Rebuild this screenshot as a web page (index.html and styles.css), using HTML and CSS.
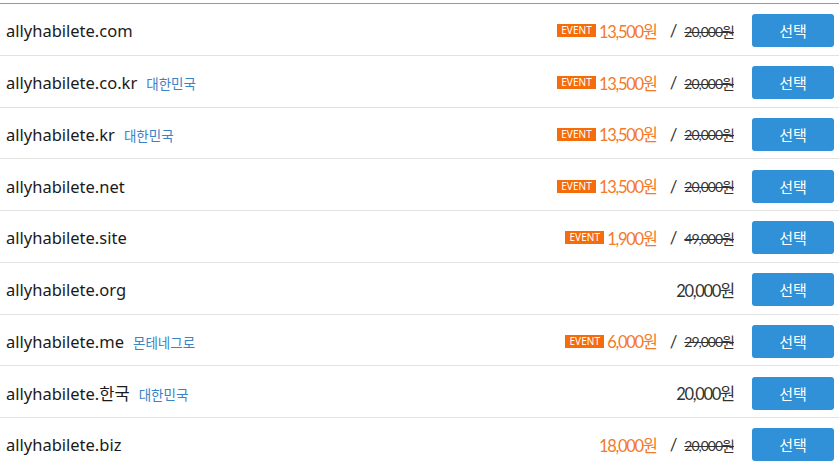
FILE: index.html
```html
<!DOCTYPE html>
<html lang="ko">
<head>
<meta charset="utf-8">
<link rel="stylesheet" href="styles.css">
</head>
<body>
<ul class="list">
  <li class="row"><div class="name">allyhabilete.com</div><div class="price"><span class="event">EVENT</span><span class="sale">13,500원</span><span class="slash">/</span><span class="old">20,000원</span></div><button class="btn">선택</button></li>
  <li class="row"><div class="name">allyhabilete.co.kr<span class="country">대한민국</span></div><div class="price"><span class="event">EVENT</span><span class="sale">13,500원</span><span class="slash">/</span><span class="old">20,000원</span></div><button class="btn">선택</button></li>
  <li class="row"><div class="name">allyhabilete.kr<span class="country">대한민국</span></div><div class="price"><span class="event">EVENT</span><span class="sale">13,500원</span><span class="slash">/</span><span class="old">20,000원</span></div><button class="btn">선택</button></li>
  <li class="row"><div class="name">allyhabilete.net</div><div class="price"><span class="event">EVENT</span><span class="sale">13,500원</span><span class="slash">/</span><span class="old">20,000원</span></div><button class="btn">선택</button></li>
  <li class="row"><div class="name">allyhabilete.site</div><div class="price"><span class="event">EVENT</span><span class="sale">1,900원</span><span class="slash">/</span><span class="old">49,000원</span></div><button class="btn">선택</button></li>
  <li class="row"><div class="name">allyhabilete.org</div><div class="price"><span class="normal">20,000원</span></div><button class="btn">선택</button></li>
  <li class="row"><div class="name">allyhabilete.me<span class="country">몬테네그로</span></div><div class="price"><span class="event">EVENT</span><span class="sale">6,000원</span><span class="slash">/</span><span class="old">29,000원</span></div><button class="btn">선택</button></li>
  <li class="row"><div class="name">allyhabilete.한국<span class="country">대한민국</span></div><div class="price"><span class="normal">20,000원</span></div><button class="btn">선택</button></li>
  <li class="row"><div class="name">allyhabilete.biz</div><div class="price"><span class="sale">18,000원</span><span class="slash">/</span><span class="old">20,000원</span></div><button class="btn">선택</button></li>
</ul>
</body>
</html>
```
FILE: styles.css
```css
html, body {
  margin: 0;
  padding: 0;
  background: #fff;
}
body {
  padding-top: 3px;
}
.list {
  list-style: none;
  margin: 0;
  padding: 0;
  border-top: 1px solid #999;
}
.row {
  box-sizing: border-box;
  display: flex;
  align-items: center;
  height: 51.75px;
  border-bottom: 1px solid #e2e2e2;
  padding: 3px 5px 0 6px;
}
.name {
  flex: 1;
  font-family: "Noto Sans", "Noto Sans CJK KR", sans-serif;
  font-size: 16.5px;
  color: #1a1a1a;
  display: flex;
  align-items: baseline;
}
.country {
  font-size: 13.5px;
  color: #3a84c6;
  margin-left: 9px;
  font-family: "Noto Sans CJK KR", sans-serif;
}
.price {
  display: flex;
  align-items: center;
  font-family: Lato, "Noto Sans CJK KR", sans-serif;
  margin-right: 18px;
}
.event {
  background: #f56c0a;
  color: #fff;
  font-family: "Noto Sans", sans-serif;
  font-size: 10px;
  line-height: 13px;
  padding: 0 4px;
  margin-right: 3px;
  letter-spacing: 0.1px;
}
.sale {
  color: #f47a2a;
  font-size: 16.5px;
  letter-spacing: -1.3px;
}
.slash {
  color: #333;
  font-size: 17px;
  margin: 0 7px 0 13px;
}
.old {
  color: #333;
  font-size: 14px;
  letter-spacing: -1px;
  text-decoration: line-through;
}
.normal {
  color: #333;
  font-size: 16.5px;
  letter-spacing: -1.3px;
}
.btn {
  width: 82px;
  height: 33px;
  border: 0;
  border-radius: 3px;
  background: #3090d8;
  color: #fff;
  font-family: "Noto Sans CJK KR", sans-serif;
  font-size: 15px;
  padding: 0;
}
```
